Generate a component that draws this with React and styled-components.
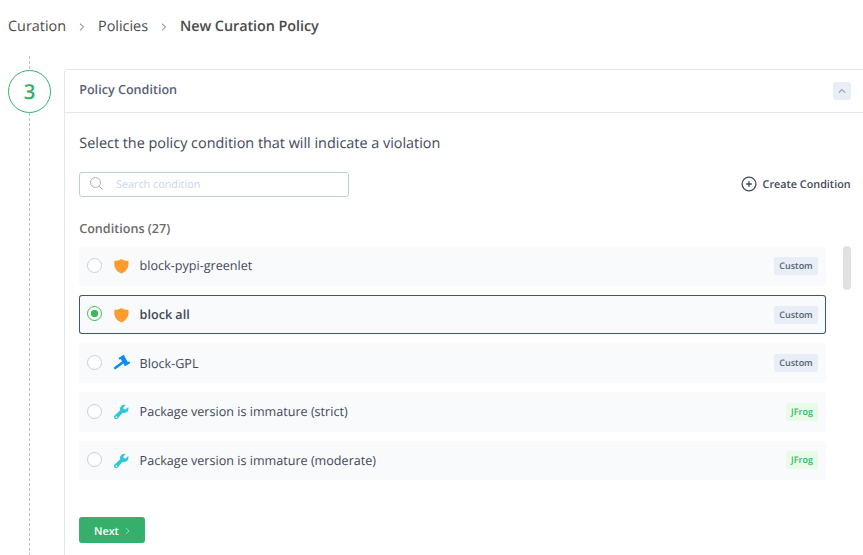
import React from 'react';
import styled, { createGlobalStyle } from 'styled-components';

const GlobalStyle = createGlobalStyle`
  *, *::before, *::after { box-sizing: border-box; }
  body {
    margin: 0;
    background: #fff;
    overflow: hidden;
    font-family: "Open Sans", sans-serif;
    color: #414857;
    text-rendering: geometricPrecision;
    -webkit-font-smoothing: antialiased;
  }
  button, input { font-family: inherit; text-rendering: inherit; }
`;

const Page = styled.div`
  width: 863px;
  height: 555px;
  overflow: hidden;
  display: flex;
  flex-direction: column;
`;

const Breadcrumbs = styled.nav`
  height: 56px;
  flex: none;
  display: flex;
  align-items: center;
  padding: 0 0 2px 8px;
  font-size: 14.4px;
  line-height: 20px;
  color: #4b4b4b;
`;

const Crumb = styled.span`
  width: ${(p) => p.$width}px;
  white-space: nowrap;
  font-weight: ${(p) => (p.$current ? 600 : 400)};
  letter-spacing: ${(p) => (p.$current ? -0.05 : 0)}px;
`;

const CrumbArrow = styled.svg`
  width: 6px;
  height: 8px;
  margin: 0 13px;
  flex: none;
`;

const Body = styled.div`
  display: flex;
  flex: 1;
  min-height: 0;
`;

const Rail = styled.aside`
  width: 64px;
  padding-left: 8px;
  flex: none;
  display: flex;
  flex-direction: column;
`;

const Dashes = styled.div`
  width: 1px;
  margin-left: 21px;
  height: ${(p) => p.$height || 'auto'};
  flex: ${(p) => (p.$height ? 'none' : 1)};
  background: repeating-linear-gradient(to bottom, #bcbfd2 0 3px, transparent 3px 5px);
`;

const StepNumber = styled.div`
  width: 43px;
  height: 43px;
  flex: none;
  border: 1px solid #35b06c;
  border-radius: 50%;
  display: flex;
  align-items: center;
  justify-content: center;
  color: #35b06c;
  font-size: 20.5px;
  font-weight: 600;
  line-height: 28px;
`;

const Panel = styled.section`
  flex: 1;
  min-width: 0;
  margin-top: 13px;
  border: 1px solid #e6e7ee;
  border-width: 1px 0 0 1px;
  border-radius: 4px 0 0 0;
  display: flex;
  flex-direction: column;
`;

const PanelHeader = styled.header`
  height: 43px;
  flex: none;
  display: flex;
  align-items: center;
  justify-content: space-between;
  border-bottom: 1px solid #e6e7ee;
  padding: 0 12px 0 14.2px;
`;

const PanelTitle = styled.h2`
  margin: 0 0 3px;
  font-size: 12.6px;
  font-weight: 600;
  line-height: 18px;
  color: #556274;
`;

const Collapse = styled.button`
  width: 18px;
  height: 18px;
  padding: 0;
  border: 0;
  border-radius: 3px;
  background: #e8edf6;
  display: grid;
  place-items: center;
`;

const PanelContent = styled.div`
  padding: 21px 12px 0 14px;
  display: flex;
  flex-direction: column;
  align-items: stretch;
`;

const Prompt = styled.p`
  margin: 0;
  height: 20px;
  line-height: 20px;
  font-size: 14.4px;
  padding-left: 0.3px;
  white-space: nowrap;
`;

const Toolbar = styled.div`
  height: 25px;
  margin-top: 18px;
  display: flex;
  align-items: center;
  justify-content: space-between;
`;

const SearchBox = styled.label`
  width: 270px;
  height: 25px;
  border: 1px solid #bfcbdf;
  border-radius: 3px;
  display: flex;
  align-items: center;
  padding: 0 0 0 10px;
  gap: 13px;

  svg { margin-bottom: 3px; }
`;

const SearchInput = styled.input`
  border: 0;
  outline: 0;
  padding: 0;
  width: 200px;
  background: transparent;
  font-size: 10.8px;
  line-height: 16px;
  &::placeholder { color: #ccd5e6; opacity: 1; }
`;

const CreateButton = styled.button`
  border: 0;
  padding: 0 0.4px 0 0;
  background: none;
  display: flex;
  align-items: center;
  gap: 6px;
  color: #414857;
  font-size: 10.8px;
  font-weight: 600;
  line-height: 17px;
  white-space: nowrap;

  svg { margin-bottom: 1px; }
`;

const ListTitle = styled.h3`
  margin: 22px 0 8px;
  height: 19px;
  line-height: 19px;
  padding-left: 0.2px;
  font-size: 12.6px;
  font-weight: 600;
  color: #6b6b6b;
`;

const ListArea = styled.div`
  display: flex;
  justify-content: space-between;
  align-items: flex-start;
`;

const List = styled.div`
  width: 747px;
  display: grid;
  grid-template-rows: 40px 39px 40px 40px 39px;
  row-gap: 9px;
`;

const Scrollbar = styled.div`
  width: 8px;
  height: 44px;
  border-radius: 4px;
  background: #e1e1e1;
`;

const Row = styled.div`
  display: flex;
  align-items: center;
  padding: 0 8px;
  border-radius: 3px;
  background: #f9fafc;
  box-shadow: ${(p) => (p.$selected ? 'inset 0 0 0 1px #3f5575' : 'none')};
  font-size: 12.6px;
  font-weight: ${(p) => (p.$selected ? 600 : 400)};
`;

const Radio = styled.span`
  width: 15px;
  height: 15px;
  margin-bottom: ${(p) => (p.$raised ? 2 : 1)}px;
  flex: none;
  border: 1px solid ${(p) => (p.$checked ? '#36bd51' : '#c6cfe0')};
  border-radius: 50%;
  background: ${(p) => (p.$checked ? 'radial-gradient(circle, #36bd51 0 3.4px, #fff 4px)' : '#fff')};
`;

const KindIcon = styled.svg`
  width: 18px;
  height: 18px;
  margin: 0 9.6px 0 10px;
  flex: none;
`;

const Name = styled.span`
  flex: 1;
  line-height: 19px;
  margin-bottom: ${(p) => (p.$raised ? 2 : 0)}px;
  white-space: nowrap;
`;

const Tag = styled.span`
  height: 18px;
  width: ${(p) => (p.$jfrog ? 32 : 44)}px;
  border-radius: 2px;
  background: ${(p) => (p.$jfrog ? '#e9fbe7' : '#e8edf6')};
  color: ${(p) => (p.$jfrog ? '#3cad72' : '#556274')};
  display: flex;
  align-items: center;
  justify-content: center;
  margin-bottom: ${(p) => (p.$raised ? 1 : 0)}px;
  padding-bottom: 1px;
  font-size: 9px;
  font-weight: 600;
`;

const NextButton = styled.button`
  width: 66px;
  height: 26px;
  margin-top: 37px;
  border: 0;
  border-radius: 3px;
  padding: 2px 0 0 15px;
  display: flex;
  align-items: center;
  gap: 6px;
  background: #35b06c;
  color: #fff;
  font-size: 10.8px;
  font-weight: 600;
`;

const Arrow = () => (
  <CrumbArrow viewBox="0 0 6 8" fill="none" stroke="#68727e" strokeWidth="1">
    <path d="M1 .7 4.5 4 1 7.3" />
  </CrumbArrow>
);

const ShieldIcon = () => (
  <KindIcon viewBox="0 0 18 18">
    <path d="M9.4 2C7.7 3.5 5.1 3.8 2.5 3.7C1.3 9.2 3.9 14.4 9.4 16.5C14.9 14.4 17.5 9.2 16.3 3.7C13.7 3.8 11.1 3.5 9.4 2Z" fill="#ff9b2f" />
  </KindIcon>
);

const GavelIcon = () => (
  <KindIcon viewBox="0 0 18 18">
    <g fill="#0c8af5" stroke="#0c8af5">
      <path stroke="none" d="M8.3 4.5 12.3 2.2 16.2 8.6 12.3 11.1Z" />
      <path d="M7 4.9 12.3 1.6" strokeWidth="2" />
      <path d="M12.5 11.5 17.8 8.2" strokeWidth="2" />
      <path d="M10.3 8.8 3.2 14" strokeWidth="2.6" strokeLinecap="round" />
    </g>
  </KindIcon>
);

const WrenchIcon = () => (
  <KindIcon viewBox="0 0 18 18">
    <path
      transform="translate(.3 0)"
      fill="#2dc8d8"
      fillRule="evenodd"
      d="M15.9 4.1 13.3 6.6 11.4 6.1 11 4.4 13.4 1.9C11.2 1.3 8.7 2.3 7.9 4.6C7.6 5.5 7.6 6.4 7.9 7.3L2.3 12.5C.4 14.4 3.3 17.5 5.4 15.5L10.4 9.8C13.8 10.9 17.2 7.8 15.9 4.1ZM4.1 13.2A.9.9 0 1 1 4.1 15A.9.9 0 1 1 4.1 13.2Z"
    />
  </KindIcon>
);

const icons = { shield: ShieldIcon, gavel: GavelIcon, wrench: WrenchIcon };

const conditions = [
  { name: 'block-pypi-greenlet', icon: 'shield', tag: 'Custom', raisedName: true },
  { name: 'block all', icon: 'shield', tag: 'Custom', selected: true, raisedRadio: true },
  { name: 'Block-GPL', icon: 'gavel', tag: 'Custom' },
  { name: 'Package version is immature (strict)', icon: 'wrench', tag: 'JFrog', raisedName: true },
  { name: 'Package version is immature (moderate)', icon: 'wrench', tag: 'JFrog', raisedTag: true, raisedRadio: true },
];

export default function App() {
  return (
    <Page>
      <GlobalStyle />
      <Breadcrumbs>
        <Crumb $width={58}>Curation</Crumb>
        <Arrow />
        <Crumb $width={50}>Policies</Crumb>
        <Arrow />
        <Crumb $width={140} $current>New Curation Policy</Crumb>
      </Breadcrumbs>
      <Body>
        <Rail>
          <Dashes $height="14px" />
          <StepNumber>3</StepNumber>
          <Dashes />
        </Rail>
        <Panel>
          <PanelHeader>
            <PanelTitle>Policy Condition</PanelTitle>
            <Collapse aria-label="Collapse">
              <svg width="8" height="6" viewBox="0 0 8 6" fill="none" stroke="#667085">
                <path d="M.8 4.7 4 1.5 7.2 4.7" />
              </svg>
            </Collapse>
          </PanelHeader>
          <PanelContent>
            <Prompt>Select the policy condition that will indicate a violation</Prompt>
            <Toolbar>
              <SearchBox>
                <svg width="13" height="13" viewBox="0 0 13 13" fill="none" stroke="#a9b2c7">
                  <circle cx="5.5" cy="5.5" r="5" />
                  <path d="m9 9 3.6 3.6" />
                </svg>
                <SearchInput placeholder="Search condition" />
              </SearchBox>
              <CreateButton>
                <svg width="16" height="16" viewBox="0 0 16 16" fill="none" stroke="#414857" strokeWidth="1.3">
                  <circle cx="8" cy="8" r="6.9" />
                  <path d="M8 5.2v5.6M5.2 8h5.6" />
                </svg>
                Create Condition
              </CreateButton>
            </Toolbar>
            <ListTitle>Conditions (27)</ListTitle>
            <ListArea>
              <List>
                {conditions.map((c) => {
                  const Icon = icons[c.icon];
                  return (
                    <Row key={c.name} $selected={c.selected}>
                      <Radio $checked={c.selected} $raised={c.raisedRadio} />
                      <Icon />
                      <Name $raised={c.raisedName}>{c.name}</Name>
                      <Tag $jfrog={c.tag === 'JFrog'} $raised={c.raisedTag}>{c.tag}</Tag>
                    </Row>
                  );
                })}
              </List>
              <Scrollbar />
            </ListArea>
            <NextButton>
              Next
              <svg width="5" height="8" viewBox="0 0 5 8" fill="none" stroke="#b5e2ca" strokeWidth=".8">
                <path d="M.8 1 4 4 .8 7" />
              </svg>
            </NextButton>
          </PanelContent>
        </Panel>
      </Body>
    </Page>
  );
}
